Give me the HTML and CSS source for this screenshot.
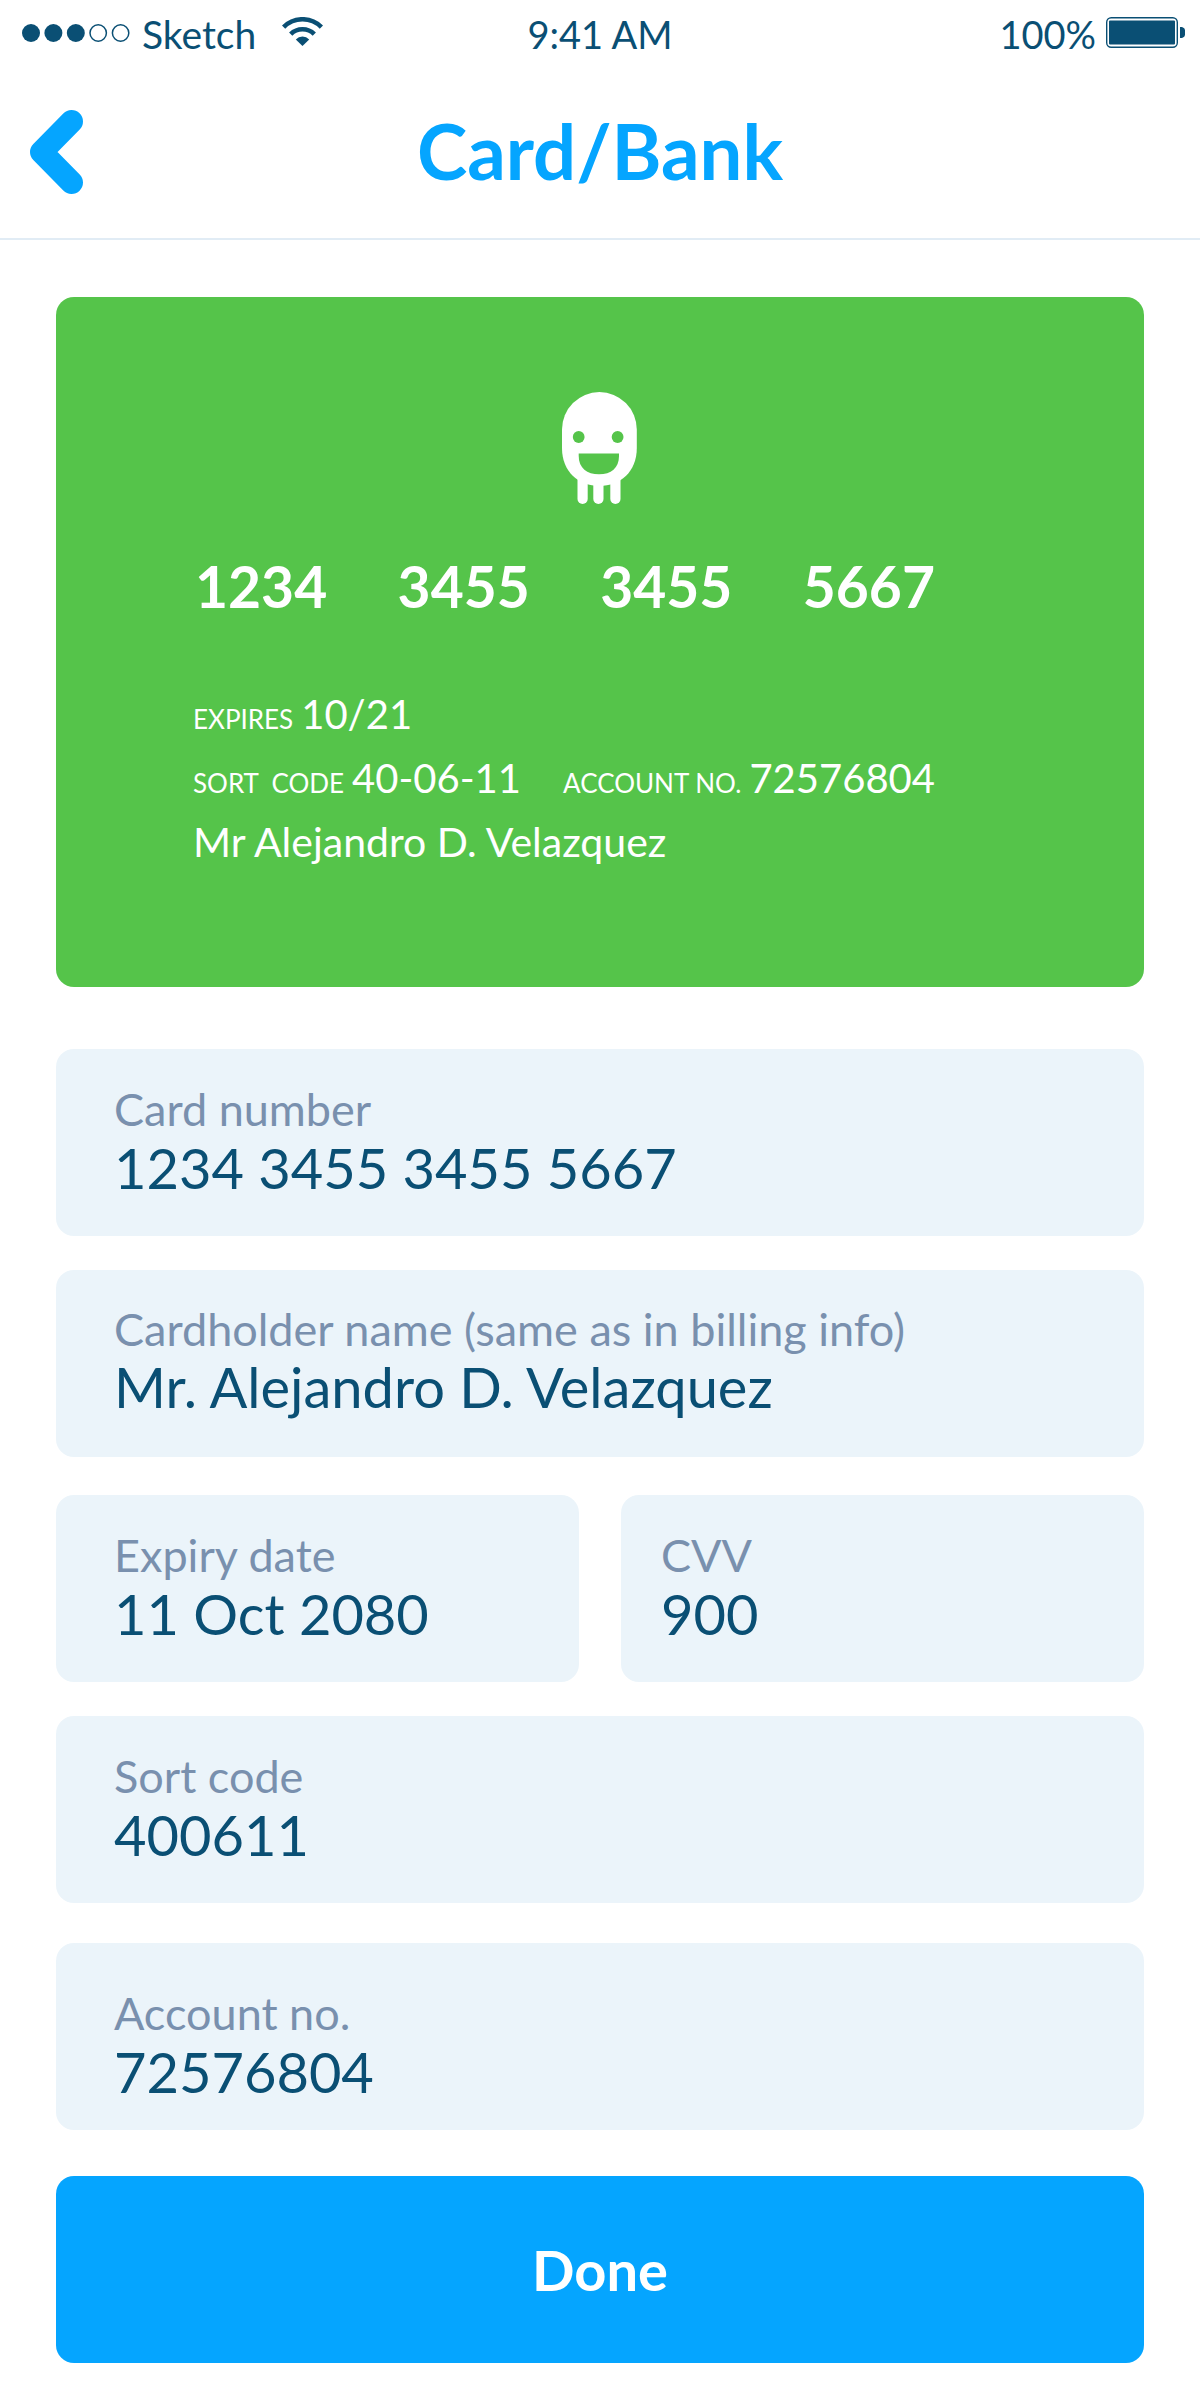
FILE: index.html
```html
<!DOCTYPE html>
<html lang="en">
<head>
  <meta charset="utf-8">
  <meta name="viewport" content="width=device-width, initial-scale=1">
  <title>Card/Bank</title>
  <link rel="stylesheet" href="styles.css">
</head>
<body>
  <div class="status">
    <div class="status__carrier">
      <svg class="status__signal" width="108" height="18" viewBox="0 0 108 18" aria-hidden="true">
        <g fill="currentColor">
          <circle cx="9" cy="9" r="9"/>
          <circle cx="31.4" cy="9" r="9"/>
          <circle cx="53.8" cy="9" r="9"/>
        </g>
        <g fill="none" stroke="currentColor" stroke-width="1.5">
          <circle cx="76.2" cy="9" r="8.2"/>
          <circle cx="98.6" cy="9" r="8.2"/>
        </g>
      </svg>
      <span>Sketch</span>
      <svg class="status__wifi" width="41" height="29" viewBox="0 0 41 29" aria-hidden="true">
        <g fill="none" stroke="currentColor" stroke-width="4.6">
          <path d="M1.6 10.1A26.7 26.7 0 0 1 39.4 10.1"/>
          <path d="M8.7 17.2A16.7 16.7 0 0 1 32.3 17.2"/>
        </g>
        <path fill="currentColor" d="M20.5 29L13.8 22.4A9.4 9.4 0 0 1 27.2 22.4Z"/>
      </svg>
    </div>
    <span>9:41 AM</span>
    <div class="status__power">
      <span>100%</span>
      <svg class="status__battery" width="79" height="31" viewBox="0 0 79 31" aria-hidden="true">
        <rect x=".7" y=".7" width="70.6" height="29.6" rx="4.5" fill="none" stroke="currentColor" stroke-width="1.4"/>
        <rect x="3" y="3.5" width="66" height="24" rx="1" fill="currentColor"/>
        <path fill="currentColor" d="M74 10H76Q79 11 79 13V18Q79 20 76 21H74Z"/>
      </svg>
    </div>
  </div>

  <header class="header">
    <button class="header__back" type="button" aria-label="Back">
      <svg width="54" height="88" viewBox="0 0 54 88" aria-hidden="true">
        <path d="M41.5 14.5L11.5 45L41.5 75.5" fill="none" stroke="currentColor" stroke-width="23" stroke-linecap="round" stroke-linejoin="round"/>
      </svg>
    </button>
    <h1 class="header__title">Card/Bank</h1>
  </header>

  <main class="main">
    <section class="card" aria-label="Bank card">
      <svg class="card__logo" width="76" height="112" viewBox="0 0 76 112" aria-hidden="true">
        <g fill="#fff">
          <path d="M0 37.5A37.4 37.4 0 0 1 74.8 37.5V56C74.8 80 58 94 37.4 94S0 80 0 56Z"/>
          <rect x="15.5" y="78" width="10.2" height="34" rx="5.1"/>
          <rect x="31.3" y="78" width="10.2" height="34" rx="5.1"/>
          <rect x="48.3" y="78" width="10.2" height="34" rx="5.1"/>
        </g>
        <g fill="#55c44a">
          <circle cx="16.7" cy="45" r="5.9"/>
          <circle cx="55.6" cy="45" r="5.9"/>
          <path d="M16.7 61.4H57V64C57 76 49 82.3 37 82.3S16.7 76 16.7 64Z"/>
        </g>
      </svg>
      <div class="card__number">
        <span>1234</span>
        <span>3455</span>
        <span>3455</span>
        <span>5667</span>
      </div>
      <div class="card__details">
        <div class="card__row">
          <span class="card__pair"><span class="card__key">EXPIRES</span> 10/21</span>
        </div>
        <div class="card__row">
          <span class="card__pair"><span class="card__key">SORT&nbsp; CODE</span> 40-06-11</span>
          <span class="card__pair"><span class="card__key">ACCOUNT NO.</span> 72576804</span>
        </div>
        <div class="card__row card__row--name">Mr Alejandro D. Velazquez</div>
      </div>
    </section>

    <form class="form">
      <div class="field">
        <label class="field__label" for="number">Card number</label>
        <input class="field__input" id="number" type="text" value="1234 3455 3455 5667">
      </div>
      <div class="field field--tight">
        <label class="field__label" for="holder">Cardholder name (same as in billing info)</label>
        <input class="field__input" id="holder" type="text" value="Mr. Alejandro D. Velazquez">
      </div>
      <div class="form__pair">
        <div class="field">
          <label class="field__label" for="expiry">Expiry date</label>
          <input class="field__input" id="expiry" type="text" value="11 Oct 2080">
        </div>
        <div class="field field--narrow">
          <label class="field__label" for="cvv">CVV</label>
          <input class="field__input" id="cvv" type="text" value="900">
        </div>
      </div>
      <div class="field">
        <label class="field__label" for="sort">Sort code</label>
        <input class="field__input" id="sort" type="text" value="400611">
      </div>
      <div class="field field--low">
        <label class="field__label" for="account">Account no.</label>
        <input class="field__input" id="account" type="text" value="72576804">
      </div>
      <button class="form__submit" type="button">Done</button>
    </form>
  </main>
</body>
</html>
```
FILE: styles.css
```css
* {
  box-sizing: border-box;
}

body {
  margin: 0;
  background: #fff;
  color: #0a4f74;
  font-family: Lato, "Liberation Sans", sans-serif;
}

button,
input {
  margin: 0;
  padding: 0;
  border: 0;
  background: none;
  font-family: inherit;
}

svg {
  display: block;
  flex: none;
}

/* Status bar */
.status {
  display: grid;
  grid-template-columns: 1fr auto 1fr;
  padding: 11px 15px 7px;
  font-size: 38px;
  line-height: 46px;
}

.status__carrier,
.status__power {
  display: flex;
  align-items: center;
}

.status__carrier {
  padding-left: 7px;
  font-size: 39px;
}

.status__signal {
  margin: 0 12px 3px 0;
}

.status__wifi {
  margin: 0 0 6px 26px;
}

.status__power {
  justify-content: flex-end;
  gap: 10px;
}

.status__battery {
  margin-bottom: 3px;
}

/* Title bar */
.header {
  display: grid;
  grid-template-columns: 1fr auto 1fr;
  align-items: center;
  padding: 41px 30px;
  border-bottom: 2px solid #e1ecf5;
  color: #05a5ff;
}

.header__back {
  justify-self: start;
  color: inherit;
}

.header__title {
  margin: 0;
  font-size: 76px;
  line-height: 92px;
  font-weight: 700;
}

.main {
  padding: 57px 56px 45px;
}

/* Bank card */
.card {
  padding: 95px 137px 113px;
  border-radius: 18px;
  background: #55c44a;
  color: #fff;
}

.card__logo {
  margin: 0 auto 47px;
}

.card__number {
  display: flex;
  justify-content: space-between;
  max-width: 742px;
  margin-bottom: 61px;
  padding-left: 2px;
  font-size: 57px;
  line-height: 70px;
  font-weight: 700;
}

.card__details {
  max-width: 742px;
  font-size: 40px;
  line-height: 64px;
}

.card__row {
  display: flex;
  justify-content: space-between;
}

.card__row--name {
  font-size: 41px;
}

.card__pair {
  display: flex;
  align-items: baseline;
  gap: 8px;
}

.card__key {
  font-size: 26px;
  line-height: 32px;
}

/* Form */
.form {
  display: flex;
  flex-direction: column;
  gap: 34px;
  margin-top: 62px;
}

.form__pair {
  display: grid;
  grid-template-columns: 1fr 1fr;
  gap: 42px;
  margin-top: 4px;
}

.field {
  display: flex;
  flex-direction: column;
  min-height: 187px;
  padding: 38px 58px 31px;
  border-radius: 18px;
  background: #ebf4fa;
}

.field--tight {
  padding-bottom: 33px;
}

.field--narrow {
  padding-right: 40px;
  padding-left: 40px;
}

.field--low {
  margin-top: 6px;
  padding-top: 48px;
  padding-bottom: 21px;
}

.field__label {
  color: #7990ae;
  font-size: 45px;
  line-height: 44px;
}

.field--tight .field__label {
  line-height: 42px;
}

.field__input {
  width: 100%;
  height: 74px;
  color: #0a4f74;
  font-size: 56px;
  line-height: 74px;
}

.form__submit {
  height: 187px;
  margin-top: 12px;
  border-radius: 18px;
  background: #05a5ff;
  color: #fff;
  font-size: 56px;
  font-weight: 700;
}
```
